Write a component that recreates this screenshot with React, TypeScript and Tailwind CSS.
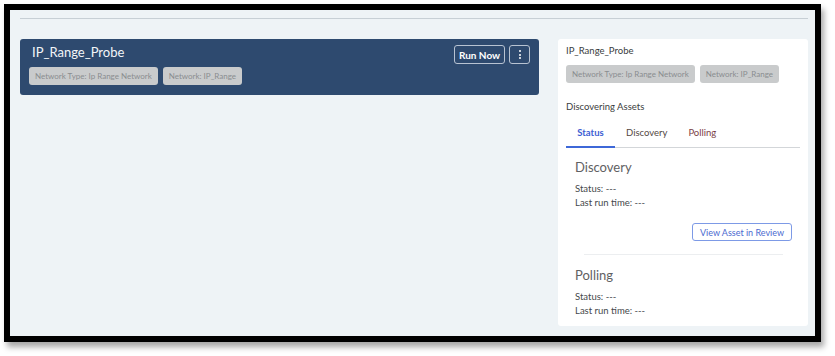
import React from 'react';

const Badge: React.FC<{ label: string }> = ({ label }) => (
  <span className="inline-flex items-center h-[18px] px-[6px] rounded-[3px] bg-[#c9cbcc] text-[8px] text-[#8a8d90] whitespace-nowrap">
    {label}
  </span>
);

const ProbeCard: React.FC = () => (
  <div className="w-[519px] h-[56px] rounded-[3px] bg-[#2e4a6f] pl-[9px] pr-[9px] flex justify-between">
    <div className="flex flex-col">
      <div className="pl-[3px] pt-[3px] h-[28px] text-[13px] text-[#f2f5f8] leading-[20px]">IP_Range_Probe</div>
      <div className="flex gap-[5px]">
        <Badge label="Network Type: Ip Range Network" />
        <Badge label="Network: IP_Range" />
      </div>
    </div>
    <div className="flex gap-[4px] pt-[6px]">
      <button className="h-[19px] w-[51px] rounded-[3px] border border-[#b8c3d2] text-[10px] font-bold text-white leading-none">
        Run Now
      </button>
      <button className="h-[19px] w-[21px] rounded-[3px] border border-[#b8c3d2] flex flex-col items-center justify-center gap-[1.5px]">
        <span className="w-[2px] h-[2px] bg-white rounded-full" />
        <span className="w-[2px] h-[2px] bg-white rounded-full" />
        <span className="w-[2px] h-[2px] bg-white rounded-full" />
      </button>
    </div>
  </div>
);

const RunInfo: React.FC<{ title: string }> = ({ title }) => (
  <div>
    <div className="text-[13px] text-[#5f6163] leading-[18px]">{title}</div>
    <div className="mt-[6px] text-[9.5px] text-[#45484b] leading-[14px]">
      <div>Status: ---</div>
      <div>Last run time: ---</div>
    </div>
  </div>
);

const DetailPanel: React.FC = () => (
  <div className="w-[250px] h-[287px] rounded-[3px] bg-white px-[8px] pt-[5px]">
    <div className="text-[9.5px] text-[#3a3d40] leading-[14px]">IP_Range_Probe</div>
    <div className="flex gap-[5px] mt-[7px]">
      <Badge label="Network Type: Ip Range Network" />
      <Badge label="Network: IP_Range" />
    </div>
    <div className="mt-[17px] text-[9.5px] text-[#3a3d40] leading-[14px]">Discovering Assets</div>
    <div className="mt-[12px] w-[234px] flex border-b border-[#d3d6d9] text-[9.5px] leading-[14px]">
      <div className="w-[49px] text-center pb-[6px] border-b-2 border-[#3d68d8] -mb-px font-bold text-[#3d5ed3]">Status</div>
      <div className="ml-[11px] pb-[6px] text-[#54483f]">Discovery</div>
      <div className="ml-[21px] pb-[6px] text-[#7a3e46]">Polling</div>
    </div>
    <div className="pl-[9px] pr-[8px] pt-[10px]">
      <RunInfo title="Discovery" />
      <div className="flex justify-end mt-[13px]">
        <button className="h-[18px] px-[7px] rounded-[3px] border border-[#7d9ae6] text-[9px] text-[#4b6ad0] leading-none">
          View Asset in Review
        </button>
      </div>
      <div className="mx-[9px] mt-[13px] border-t border-[#eceef0]" />
      <div className="pt-[11px]">
        <RunInfo title="Polling" />
      </div>
    </div>
  </div>
);

export default function App() {
  return (
    <div className="w-[835px] h-[356px] bg-white pl-[4px] pt-[4px]" style={{ fontFamily: 'Lato, "Open Sans", sans-serif' }}>
      <div className="w-[817px] h-[338px] border-[6px] border-black shadow-[3px_5px_6px_rgba(0,0,0,0.35)]">
        <div className="w-full h-full bg-[#eef3f6] pl-[10px] pr-[7px] pt-[8px]">
          <div className="border-t border-[#c7cfd5]" />
          <div className="flex gap-[19px] mt-[20px]">
            <ProbeCard />
            <DetailPanel />
          </div>
        </div>
      </div>
    </div>
  );
}
